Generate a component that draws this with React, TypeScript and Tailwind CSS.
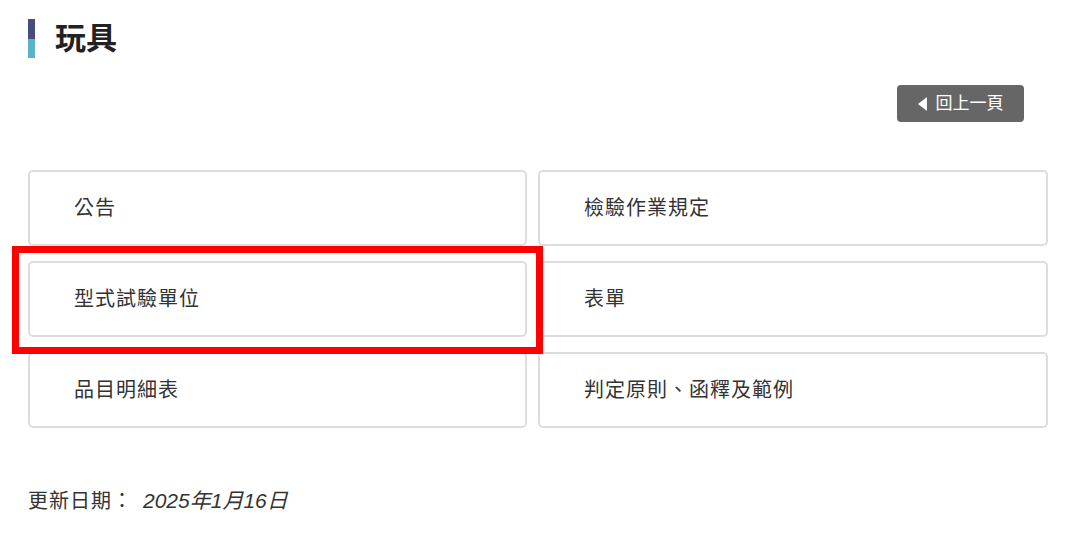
import React from 'react';

const links = [
  '公告',
  '檢驗作業規定',
  '型式試驗單位',
  '表單',
  '品目明細表',
  '判定原則、函釋及範例',
];

export default function App() {
  return (
    <div
      className="relative min-h-[550px] bg-white px-[28px] pt-[19px] text-[#333]"
      style={{ fontFamily: '"Liberation Sans", "Noto Sans CJK TC", sans-serif' }}
    >
      <div className="flex items-center gap-[20px]">
        <div className="flex h-[39px] w-[7px] flex-col">
          <span className="flex-1 bg-[#464d7a]" />
          <span className="flex-1 bg-[#5bb3c6]" />
        </div>
        <h1 className="text-[31px] font-bold leading-[39px] text-[#222]">玩具</h1>
      </div>

      <div className="mt-[27px] flex justify-end pr-[24px]">
        <button className="flex h-[37px] w-[127px] items-center justify-center gap-[9px] rounded-[4px] bg-[#666] text-[17px] text-white">
          <svg width="9" height="14" viewBox="0 0 9 14" aria-hidden="true">
            <path d="M9 0 L0 7 L9 14 Z" fill="#fff" />
          </svg>
          <span>回上一頁</span>
        </button>
      </div>

      <div className="mt-[48px] grid grid-cols-[499px_1fr] gap-x-[11px] gap-y-[15px]">
        {links.map((label) => (
          <a
            key={label}
            href="#"
            className="flex h-[76px] items-center rounded-[5px] border-2 border-[#ddd] pl-[44px] text-[20px] tracking-[1px] text-[#333]"
          >
            {label}
          </a>
        ))}
      </div>

      <div className="mt-[57px] flex items-center text-[20px] text-[#333]">
        <span className="tracking-[1px]">更新日期：</span>
        <span className="ml-[10px] text-[21px] italic">2025年1月16日</span>
      </div>

      <div className="pointer-events-none absolute left-[12px] top-[246px] h-[108px] w-[531px] border-[7px] border-[#f00]" />
    </div>
  );
}
